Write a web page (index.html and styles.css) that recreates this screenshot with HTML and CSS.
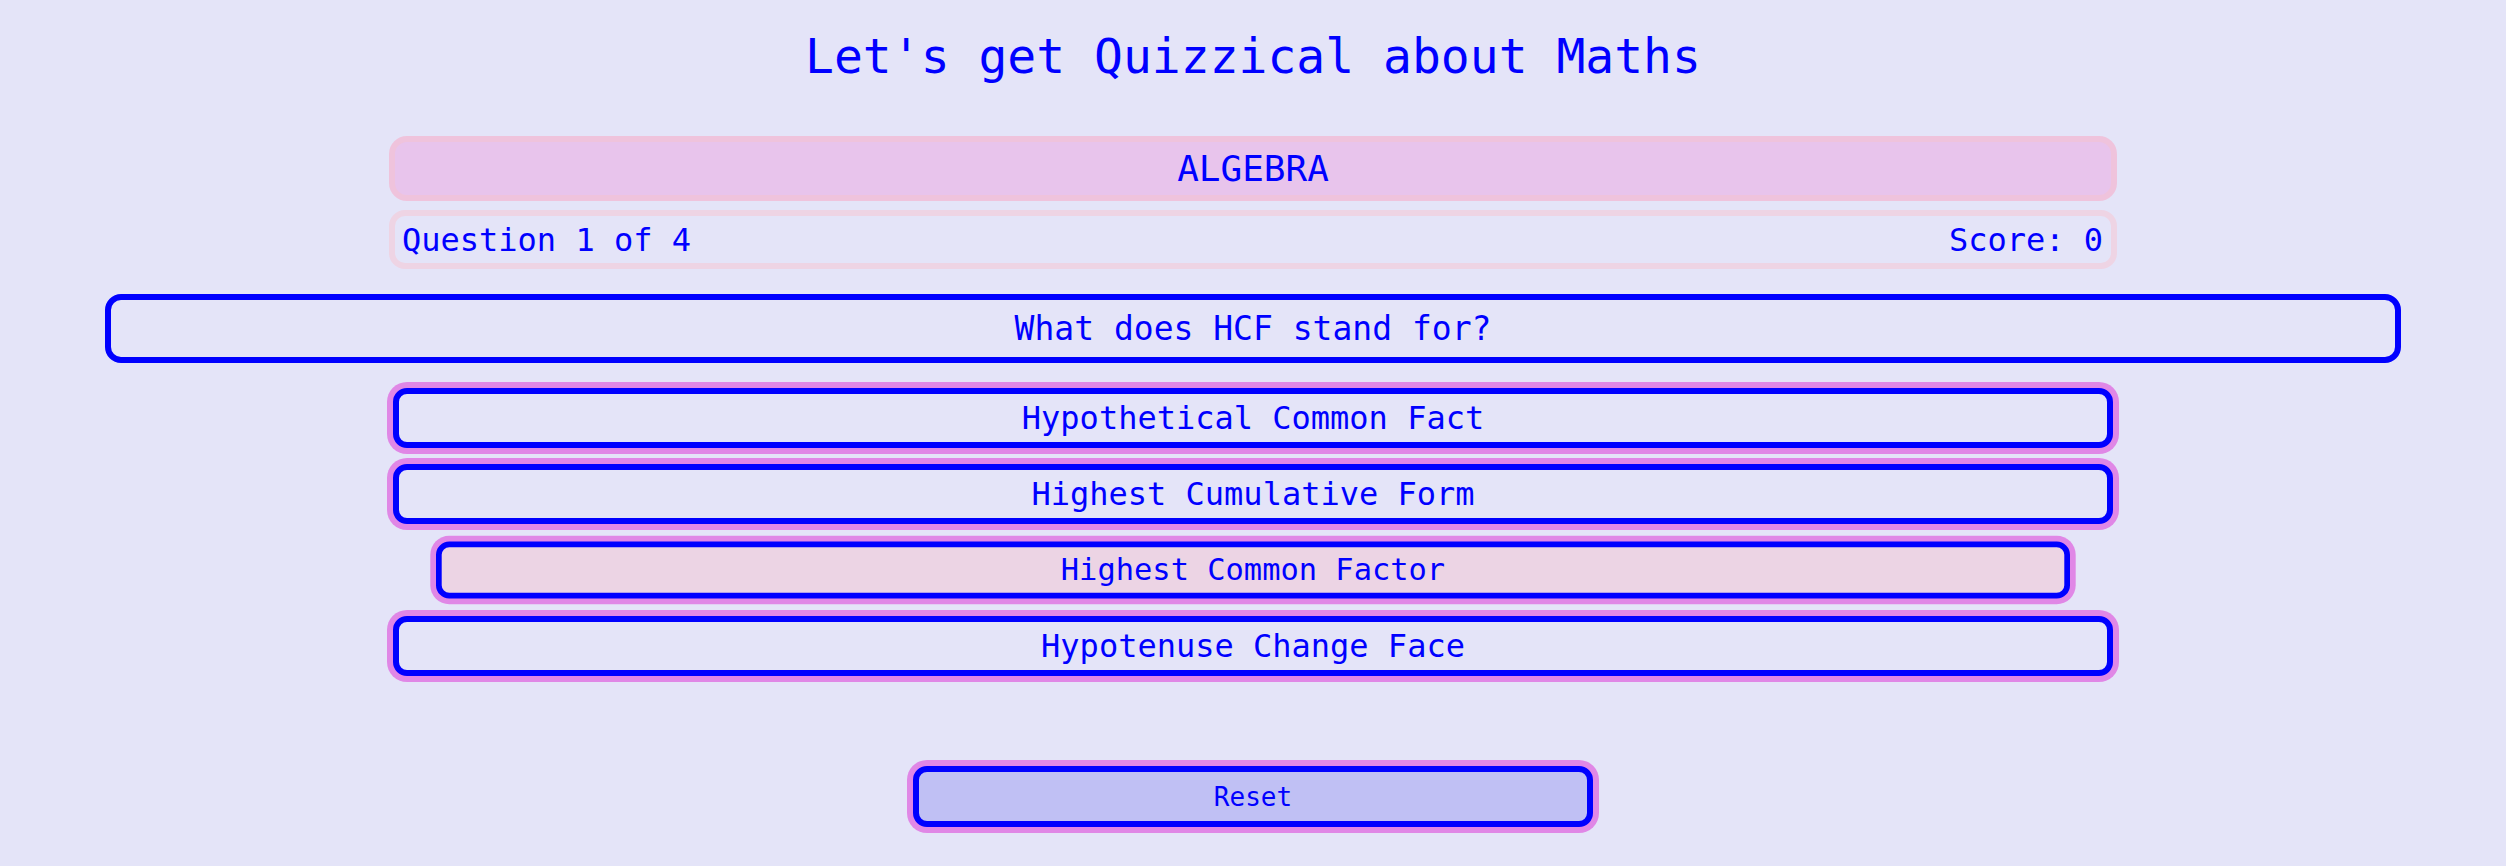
FILE: index.html
```html
<!DOCTYPE html>
<html lang="en">
<head>
<meta charset="utf-8">
<title>Quizzical</title>
<link rel="stylesheet" href="styles.css">
</head>
<body>
<main class="app">
  <h1 class="title">Let's get Quizzical about Maths</h1>
  <section class="header">
    <div class="category">ALGEBRA</div>
    <div class="status">
      <span>Question 1 of 4</span>
      <span>Score: 0</span>
    </div>
  </section>
  <div class="question">What does HCF stand for?</div>
  <div class="answers">
    <button class="answer">Hypothetical Common Fact</button>
    <button class="answer">Highest Cumulative Form</button>
    <button class="answer selected">Highest Common Factor</button>
    <button class="answer">Hypotenuse Change Face</button>
  </div>
  <button class="reset">Reset</button>
</main>
</body>
</html>
```
FILE: styles.css
```css
html, body {
  margin: 0;
  padding: 0;
  background: #e4e4f8;
}
body {
  font-family: "DejaVu Sans Mono", "Liberation Mono", monospace;
  color: #0000ff;
  min-height: 866px;
}
.app {
  display: flex;
  flex-direction: column;
  align-items: center;
  padding-top: 28px;
  padding-bottom: 32px;
}
.title {
  margin: 0;
  font-size: 48px;
  line-height: 56px;
  font-weight: normal;
}
.header {
  width: 1728px;
  margin-top: 52px;
  display: flex;
  flex-direction: column;
  gap: 9px;
}
.category {
  box-sizing: border-box;
  height: 65px;
  border: 6px solid #efc3dc;
  background: #e8c4ec;
  border-radius: 18px;
  display: flex;
  align-items: center;
  justify-content: center;
  font-size: 36px;
}
.status {
  box-sizing: border-box;
  height: 59px;
  border: 6px solid #eed4e4;
  border-radius: 16px;
  padding: 0 8px 0 7px;
  display: flex;
  justify-content: space-between;
  align-items: center;
  font-size: 32px;
}
.question {
  box-sizing: border-box;
  margin-top: 25px;
  width: 2296px;
  height: 69px;
  border: 6px solid #0000ff;
  border-radius: 16px;
  display: flex;
  align-items: center;
  justify-content: center;
  font-size: 33px;
}
.answers {
  margin-top: 25px;
  width: 1720px;
  display: flex;
  flex-direction: column;
  gap: 16px;
}
.answer, .reset {
  box-sizing: border-box;
  font-family: inherit;
  color: #0000ff;
  border: 6px solid #0000ff;
  box-shadow: 0 0 0 6px #e087e6;
  border-radius: 14px;
  padding: 0;
  margin: 0;
  display: flex;
  align-items: center;
  justify-content: center;
}
.answer {
  height: 60px;
  width: 100%;
  background: #e4e4f8;
  font-size: 32px;
}
.answer.selected {
  background: #ecd4e4;
  transform: scale(0.95);
}
.reset {
  margin-top: 90px;
  width: 680px;
  height: 61px;
  background: #c0c0f4;
  font-size: 26px;
}
```
